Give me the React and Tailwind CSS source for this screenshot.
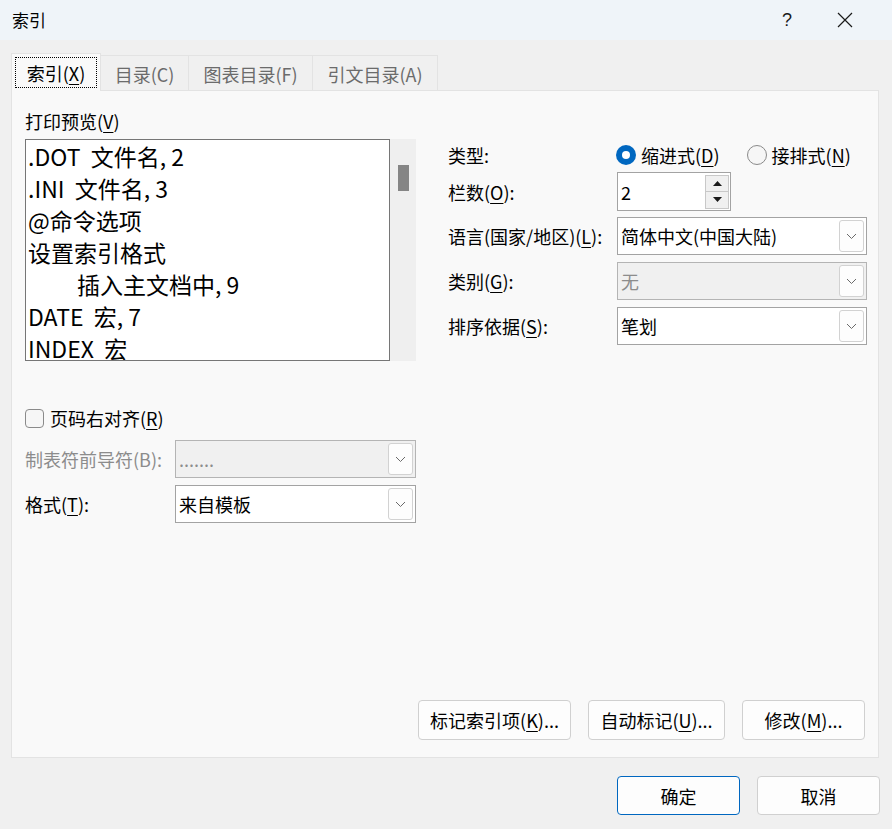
import React from 'react';

// Windows "索引" dialog (Word index settings)

const Chevron = () => (
  <svg width="11" height="7" viewBox="0 0 11 7" fill="none">
    <path d="M1 1l4.5 4.5L10 1" stroke="#6a6a6a" strokeWidth="1" />
  </svg>
);

const Combo = ({ value, disabled, className }) => (
  <div
    className={
      'flex items-center h-[38px] border ' +
      (disabled ? 'border-[#b4b4b4] bg-[#f0f0f0] text-[#8c8c8c] ' : 'border-[#a3a3a3] bg-white text-black ') +
      className
    }
  >
    <span className="flex-1 pl-[3px] whitespace-pre">{value}</span>
    <span className="w-[25px] h-[32px] mr-[2px] flex items-center justify-center border border-[#d2d2d2] rounded-[3px] bg-[#fdfdfd]">
      <Chevron />
    </span>
  </div>
);

const Radio = ({ checked, children }) => (
  <div className="flex items-center gap-[5px]">
    {checked ? (
      <span className="w-[20px] h-[20px] rounded-full bg-[#0067c0] flex items-center justify-center">
        <span className="w-[8px] h-[8px] rounded-full bg-white" />
      </span>
    ) : (
      <span className="w-[20px] h-[20px] rounded-full border border-[#8a8a8a] bg-[#f6f6f6]" />
    )}
    <span>{children}</span>
  </div>
);

const Button = ({ children, className }) => (
  <button className={'flex items-center justify-center h-[40px] rounded-[4px] border border-[#d0d0d0] bg-[#fdfdfd] text-black ' + className}>
    {children}
  </button>
);

const Key = ({ children }) => <u className="underline-offset-[3px] decoration-1">{children}</u>;

const previewLines = [
  { text: '.DOT  文件名, 2' },
  { text: '.INI  文件名, 3' },
  { text: '@命令选项' },
  { text: '设置索引格式' },
  { text: '插入主文档中, 9', indent: true },
  { text: 'DATE  宏, 7' },
  { text: 'INDEX  宏' },
];

export default function App() {
  return (
    <div className="w-[892px] h-[829px] bg-[#f0f0f0] flex flex-col text-[18px] text-black font-['Noto_Sans_CJK_SC',sans-serif] leading-[24px] overflow-hidden">
      {/* title bar */}
      <div className="h-[40px] bg-[#eff4f9] flex items-center shrink-0">
        <span className="pl-[12px] text-[17px]">索引</span>
        <div className="ml-auto flex items-center">
          <span className="w-[46px] text-center text-[18px] text-[#1a1a1a] font-['Liberation_Sans',sans-serif]">?</span>
          <span className="w-[70px] mr-[12px] flex justify-center">
            <svg width="16" height="16" viewBox="0 0 16 16">
              <path d="M1 1l14 14M15 1L1 15" stroke="#1a1a1a" strokeWidth="1.2" />
            </svg>
          </span>
        </div>
      </div>

      <div className="flex-1 flex flex-col pl-[11px] pr-[12px] pt-[13px]">
        {/* tabs */}
        <div className="flex items-end h-[38px] -mb-px relative z-10">
          <div className="w-[90px] h-[38px] bg-[#f9f9f9] border border-b-0 border-[#e3e3e3] p-[3px]">
            <div className="h-full border border-dotted border-black flex items-center justify-center">
              索引(<Key>X</Key>)
            </div>
          </div>
          <div className="w-[88px] h-[36px] border-t border-r border-[#e3e3e3] flex items-center justify-center text-[#6b6b6b]">目录(C)</div>
          <div className="w-[124px] h-[36px] border-t border-r border-[#e3e3e3] flex items-center justify-center text-[#6b6b6b]">图表目录(F)</div>
          <div className="w-[125px] h-[36px] border-t border-r border-[#e3e3e3] flex items-center justify-center text-[#6b6b6b]">引文目录(A)</div>
        </div>

        {/* tab pane */}
        <div className="w-[868px] h-[668px] bg-[#f9f9f9] border border-[#e3e3e3] flex flex-col">
          <div className="flex pl-[13px]">
            {/* left column */}
            <div className="w-[391px] flex flex-col pt-[18px]">
              <div>打印预览(<Key>V</Key>)</div>
              <div className="mt-[6px] flex h-[222px]">
                <div className="w-[365px] h-full bg-white border border-[#767676] overflow-hidden pl-[2px] text-[23px] leading-[32px]">
                  {previewLines.map((l, i) => (
                    <div key={i} className={'whitespace-pre ' + (l.indent ? 'pl-[49px]' : '')}>{l.text}</div>
                  ))}
                </div>
                <div className="w-[26px] h-full bg-[#efefef] pt-[26px] flex justify-center">
                  <div className="w-[11px] h-[26px] bg-[#858585]" />
                </div>
              </div>

              <div className="mt-[45px] flex items-center gap-[6px] h-[24px]">
                <span className="w-[19px] h-[19px] rounded-[4px] border border-[#8a8a8a] bg-[#f6f6f6]" />
                <span>页码右对齐(<Key>R</Key>)</span>
              </div>

              <div className="mt-[10px] flex items-center">
                <span className="w-[150px] text-[#8c8c8c]">制表符前导符(B):</span>
                <Combo value="......." disabled className="w-[241px]" />
              </div>
              <div className="mt-[7px] flex items-center">
                <span className="w-[150px]">格式(<Key>T</Key>):</span>
                <Combo value="来自模板" className="w-[241px]" />
              </div>
            </div>

            {/* right column */}
            <div className="ml-[32px] w-[419px] flex flex-col pt-[52px]">
              <div className="flex items-center h-[24px]">
                <span className="w-[168px]">类型:</span>
                <Radio checked>缩进式(<Key>D</Key>)</Radio>
                <div className="ml-[27px]">
                  <Radio>接排式(<Key>N</Key>)</Radio>
                </div>
              </div>

              <div className="mt-[5px] flex items-center">
                <span className="w-[169px]">栏数(<Key>O</Key>):</span>
                <div className="w-[114px] h-[39px] bg-white border border-[#a3a3a3] flex items-center">
                  <span className="flex-1 pl-[3px]">2</span>
                  <div className="w-[24px] mr-[1px] flex flex-col">
                    <div className="h-[17px] bg-[#f0f0f0] border border-[#c8c8c8] flex items-center justify-center">
                      <svg width="9" height="5" viewBox="0 0 9 5"><path d="M4.5 0L9 5H0z" fill="#1a1a1a" /></svg>
                    </div>
                    <div className="h-[17px] bg-[#f0f0f0] border border-t-0 border-[#c8c8c8] flex items-center justify-center">
                      <svg width="9" height="5" viewBox="0 0 9 5"><path d="M0 0h9L4.5 5z" fill="#1a1a1a" /></svg>
                    </div>
                  </div>
                </div>
              </div>

              <div className="mt-[6px] flex items-center">
                <span className="w-[169px]">语言(国家/地区)(<Key>L</Key>):</span>
                <Combo value="简体中文(中国大陆)" className="w-[250px]" />
              </div>
              <div className="mt-[7px] flex items-center">
                <span className="w-[169px]">类别(<Key>G</Key>):</span>
                <Combo value="无" disabled className="w-[250px]" />
              </div>
              <div className="mt-[7px] flex items-center">
                <span className="w-[169px]">排序依据(<Key>S</Key>):</span>
                <Combo value="笔划" className="w-[250px]" />
              </div>
            </div>
          </div>

          <div className="mt-auto flex justify-end gap-[17px] pr-[13px] pb-[17px]">
            <Button className="w-[153px]">标记索引项(<Key>K</Key>)...</Button>
            <Button className="w-[137px]">自动标记(<Key>U</Key>)...</Button>
            <Button className="w-[123px]">修改(<Key>M</Key>)...</Button>
          </div>
        </div>

        {/* dialog buttons */}
        <div className="mt-[18px] flex justify-end gap-[17px]">
          <button className="w-[123px] h-[39px] rounded-[4px] border border-[#0067c0] bg-[#fdfdfd] flex items-center justify-center">确定</button>
          <button className="w-[123px] h-[39px] rounded-[4px] border border-[#d0d0d0] bg-[#fdfdfd] flex items-center justify-center">取消</button>
        </div>
      </div>
    </div>
  );
}
